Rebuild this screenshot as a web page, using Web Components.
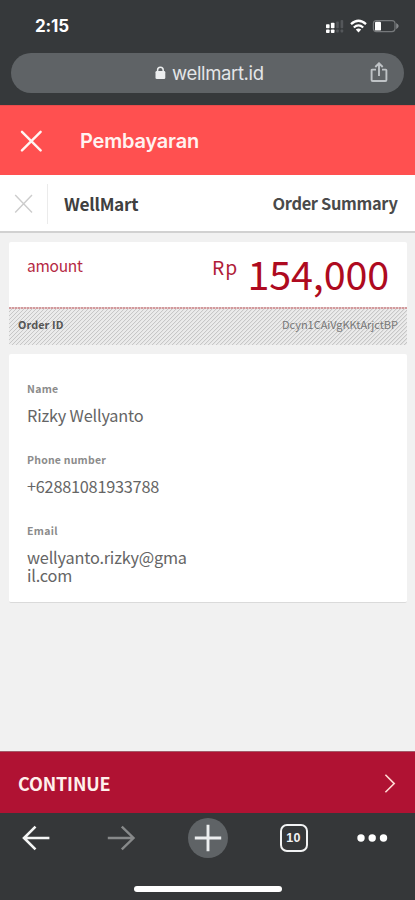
<!DOCTYPE html>
<html lang="id">
<head>
<meta charset="utf-8">
<meta name="viewport" content="width=device-width, initial-scale=1">
<title>Pembayaran</title>
<style>
html, body { margin: 0; height: 100%; background: #f1f1f1; overflow: hidden; }
</style>
</head>
<body>
<payment-screen></payment-screen>
<script>
const define = (name, html, extra) => customElements.define(name, class extends HTMLElement {
  constructor() {
    super();
    this.attachShadow({ mode: 'open' }).innerHTML = html;
  }
  connectedCallback() { if (extra) extra(this); }
});

/* Text whose tracking is adjusted to span a given width; with "wrap" it then breaks anywhere inside its box. */
define('text-run', `<style>
  :host { display: block; flex: none; white-space: pre; line-height: 20px; height: 20px; }
  span { display: inline-block; vertical-align: top; }
</style><span><slot></slot></span>`, el => {
  const s = el.shadowRoot.querySelector('span');
  const w = +el.getAttribute('w');
  s.style.letterSpacing = '0';
  const n = el.textContent.length;
  const natural = s.getBoundingClientRect().width;
  if (w && natural) s.style.letterSpacing = ((w - natural) / n) + 'px';
  if (el.hasAttribute('wrap')) {
    s.style.whiteSpace = 'normal';
    s.style.wordBreak = 'break-all';
    s.style.width = el.getAttribute('wrap') + 'px';
  }
});

define('status-bar', `<style>
  :host { display: flex; height: 53px; box-sizing: border-box; padding: 16px 15px 0 35px; justify-content: space-between; color: #fff; }
  text-run { font: 700 17px/20px Inter, sans-serif; }
  svg { display: block; margin-top: 1px; }
</style>
<text-run w="34">2:15</text-run>
<svg width="75" height="20" viewBox="325 17 75 20">
  <g fill="#fff"><rect x="326" y="24.3" width="3.6" height="4" rx=".8"/><rect x="330.9" y="22.8" width="3.6" height="5.5" rx=".8"/><rect x="326" y="29.4" width="3.6" height="3.6" rx=".8"/><rect x="330.9" y="29.4" width="3.6" height="3.6" rx=".8"/></g>
  <g fill="#54575a"><rect x="336.2" y="21.5" width="2.6" height="6.8" rx=".8"/><rect x="340.6" y="20" width="2.6" height="8.3" rx=".8"/><rect x="336.2" y="29.4" width="2.6" height="3.2" rx=".8"/><rect x="340.6" y="29.4" width="2.6" height="3.2" rx=".8"/></g>
  <g fill="none" stroke="#fff" stroke-width="2.3"><path d="M351 24.1q7.5-6.8 15 0"/><path d="M353.8 27.5q4.7-4.2 9.4 0"/></g>
  <path fill="#fff" d="M355.8 29.6q2.7-2.2 5.4 0L358.5 32.4z"/>
  <rect x="373.4" y="20.6" width="21.6" height="11" rx="3" fill="none" stroke="#76797b" stroke-width="1.2"/>
  <rect x="375" y="21.8" width="6" height="8.8" rx="1.2" fill="#fff"/>
  <path d="M396.2 22.9q5 3.2 0 6.4z" fill="#85888a"/>
</svg>`);

define('address-bar', `<style>
  :host { display: flex; align-items: center; height: 40px; margin: 0 11px; border-radius: 20px; background: #5f6366; color: #e4e6e8; box-sizing: border-box; padding: 0 16px 0 144px; }
  text-run { font: 400 18.5px/20px Inter, sans-serif; margin-left: 6px; }
  .share { margin-left: auto; }
</style>
<svg width="11" height="14" viewBox="0 0 11 14"><rect x=".5" y="5" width="9.8" height="8" rx="1.3" fill="#eceeef"/><path d="M2.6 6V4.1a2.8 2.8 0 0 1 5.6 0V6" fill="none" stroke="#eceeef" stroke-width="1.5"/></svg>
<text-run w="91.7">wellmart.id</text-run>
<svg class="share" width="18" height="22" viewBox="0 0 18 22"><path d="M6 7.6H2.3q-.7 0-.7.7V18q0 1 1 1H15.4q1 0 1-1V8.3q0-.7-.7-.7H12M9 14V1.6M5.3 5 9 1.3l3.7 3.7" fill="none" stroke="#bfc3c6" stroke-width="1.9"/></svg>`);

define('page-title', `<style>
  :host { display: flex; height: 70px; align-items: center; box-sizing: border-box; padding: 0 0 0 20px; background: #ff5050; border-top: 1px solid #e84b4c; }
  text-run { font: 600 20px/20px Inter, sans-serif; margin-left: 38px; color: #fff3f0; }
</style>
<svg width="22" height="22" viewBox="0 0 22 22"><path d="M2 1.8 20.6 20.4M20.6 1.8 2 20.4" stroke="#fff6f3" stroke-width="2.4" stroke-linecap="round"/></svg>
<text-run w="119">Pembayaran</text-run>`);

define('merchant-bar', `<style>
  :host { display: flex; height: 58px; box-sizing: border-box; background: #fff; border-bottom: 2px solid #d1d1d1; padding-right: 17.5px; justify-content: space-between; }
  .close { width: 47px; margin: 9px 0 7px; border-right: 1px solid #ebebeb; }
  .left { display: flex; }
  svg { display: block; margin: 10px 0 0 14px; }
  text-run { font: 700 17.3px/20px "Noto Sans CJK SC", sans-serif; color: #404040; margin: 19px 0 0 16px; }
  .sum { font-size: 16.4px; margin-top: 18px; color: #4a4a4a; }
</style>
<div class="left"><div class="close"><svg width="20" height="20" viewBox="0 0 20 20"><path d="M1.2 1 18 18.5M18 1 1.2 18.5" stroke="#ccc" stroke-width="1.4"/></svg></div>
<text-run w="74.3">WellMart</text-run></div>
<text-run class="sum" w="125">Order Summary</text-run>`);

define('amount-card', `<style>
  :host { display: block; margin: 9px 8px 0 9px; font-family: "Noto Sans CJK SC", sans-serif; }
  .top { display: flex; height: 65px; background: #fff; border-radius: 2px 2px 0 0; box-sizing: border-box; padding: 0 18px; }
  .amount { font-size: 15.5px; margin-top: 12.5px; color: #b52843; }
  .rp { font-size: 19.3px; margin: 15px 0 0 auto; color: #b01c38; }
  .value { font-size: 39.5px; line-height: 40px; height: 40px; margin: 11px 0 0 9.5px; color: #ae0a20; }
  .rule { height: 2px; background: repeating-linear-gradient(90deg, #d29a9d 0 2px, #e6cdcd 2px 3px); }
  .order { display: flex; justify-content: space-between; height: 36px; box-sizing: border-box; padding: 4px 9px 0; border-radius: 0 0 2px 2px;
    background: repeating-linear-gradient(135deg, #ebebeb 0 1.45px, #c7c7c7 1.75px 2.35px, #ebebeb 2.83px); font-size: 11px; color: #777; }
  .order text-run { margin-top: 1px; }
  .id { font-weight: 700; color: #555; font-size: 10.8px; }
</style>
<div class="top"><text-run class="amount" w="55.5">amount</text-run><text-run class="rp" w="26">Rp</text-run><text-run class="value" w="141.5">154,000</text-run></div>
<div class="rule"></div>
<div class="order"><text-run class="id" w="45.5">Order ID</text-run><text-run w="116">Dcyn1CAiVgKKtArjctBP</text-run></div>`);

define('detail-field', `<style>
  :host { display: block; height: 71px; }
  ::slotted(text-run) { font-size: 16.3px; color: #656565; line-height: 18px; height: 18px; }
  ::slotted([slot=label]) { font-weight: 700; font-size: 10.5px; color: #8b8b8b; line-height: 20px; height: 20px; }
  ::slotted([slot=value]) { margin-top: 7px; }
</style><slot name="label"></slot><slot name="value"></slot>`);

define('customer-card', `<style>
  :host { display: block; height: 249px; margin: 9px 8px 0 9px; box-sizing: border-box; padding: 24.5px 18px 0; background: #fff; border-radius: 2px; border-bottom: 1.5px solid #dadada; font-family: "Noto Sans CJK SC", sans-serif; }
</style>
<detail-field><text-run slot="label" w="31.5">Name</text-run><text-run slot="value" w="116.5">Rizky Wellyanto</text-run></detail-field>
<detail-field><text-run slot="label" w="79">Phone number</text-run><text-run slot="value" w="132">+62881081933788</text-run></detail-field>
<detail-field><text-run slot="label" w="31">Email</text-run><text-run slot="value" w="205" wrap="162">wellyanto.rizky@gmail.com</text-run></detail-field>`);

define('continue-bar', `<style>
  :host { display: flex; align-items: center; justify-content: space-between; height: 62px; background: #b01233; border-top: 1px solid #a25a68; box-sizing: border-box; padding: 0 19px 0 18px; color: #fff0ec; }
  text-run { font: 700 18px/20px "Noto Sans CJK SC", sans-serif; }
</style>
<text-run w="92.5">CONTINUE</text-run>
<svg width="12" height="20" viewBox="0 0 12 20"><path d="M1.4 1.8 10.2 10.6 1.4 19.2" fill="none" stroke="#ffd9d3" stroke-width="1.6"/></svg>`);

define('browser-toolbar', `<style>
  :host { display: grid; grid-template-columns: 85px 85px 87.5px 78.5px 36px; align-items: center; height: 50px; padding-left: 18px; }
  svg { display: block; }
  .tabs { box-sizing: border-box; width: 28px; height: 28px; margin-left: 4px; border: 2.6px solid #f2f3f4; border-radius: 7px; display: flex; align-items: center; justify-content: center; color: #f2f3f4; }
  text-run { font: 700 12.5px/20px "Liberation Sans", sans-serif; }
</style>
<svg width="36" height="40" viewBox="0 0 36 40"><path d="M31.4 20H6M17.5 8.6 6 20l11.5 11.4" fill="none" stroke="#f4f5f5" stroke-width="2.6"/></svg>
<svg width="36" height="40" viewBox="0 0 36 40"><path d="M4.8 20H30.5M18.8 8.6 30.5 20 18.8 31.4" fill="none" stroke="#87898a" stroke-width="2.4"/></svg>
<svg width="40" height="40" viewBox="0 0 40 40"><circle cx="20" cy="20" r="20" fill="#5f6366"/><path d="M20 6.8V33.2M6.8 20H33.2" stroke="#eceeef" stroke-width="2.9"/></svg>
<div class="tabs"><text-run w="14.5">10</text-run></div>
<svg width="36" height="40" viewBox="0 0 36 40"><g fill="#fff"><circle cx="7" cy="20" r="3.7"/><circle cx="18.2" cy="20" r="3.7"/><circle cx="29.5" cy="20" r="3.7"/></g></svg>`);

define('payment-screen', `<style>
  :host { display: flex; flex-direction: column; width: 415px; height: 900px; background: #f1f1f1; overflow: hidden; }
  header { background: #36393b; height: 105px; flex: none; }
  main { flex: 1; }
  footer { background: #353739; height: 87px; flex: none; }
  .home { width: 148px; height: 6.5px; border-radius: 3.5px; background: #fff; margin: 22.5px auto 0; }
  continue-bar, page-title, merchant-bar { flex: none; }
</style>
<header><status-bar></status-bar><address-bar></address-bar></header>
<page-title></page-title>
<merchant-bar></merchant-bar>
<main><amount-card></amount-card><customer-card></customer-card></main>
<continue-bar></continue-bar>
<footer><browser-toolbar></browser-toolbar><div class="home"></div></footer>`);
</script>
</body>
</html>
